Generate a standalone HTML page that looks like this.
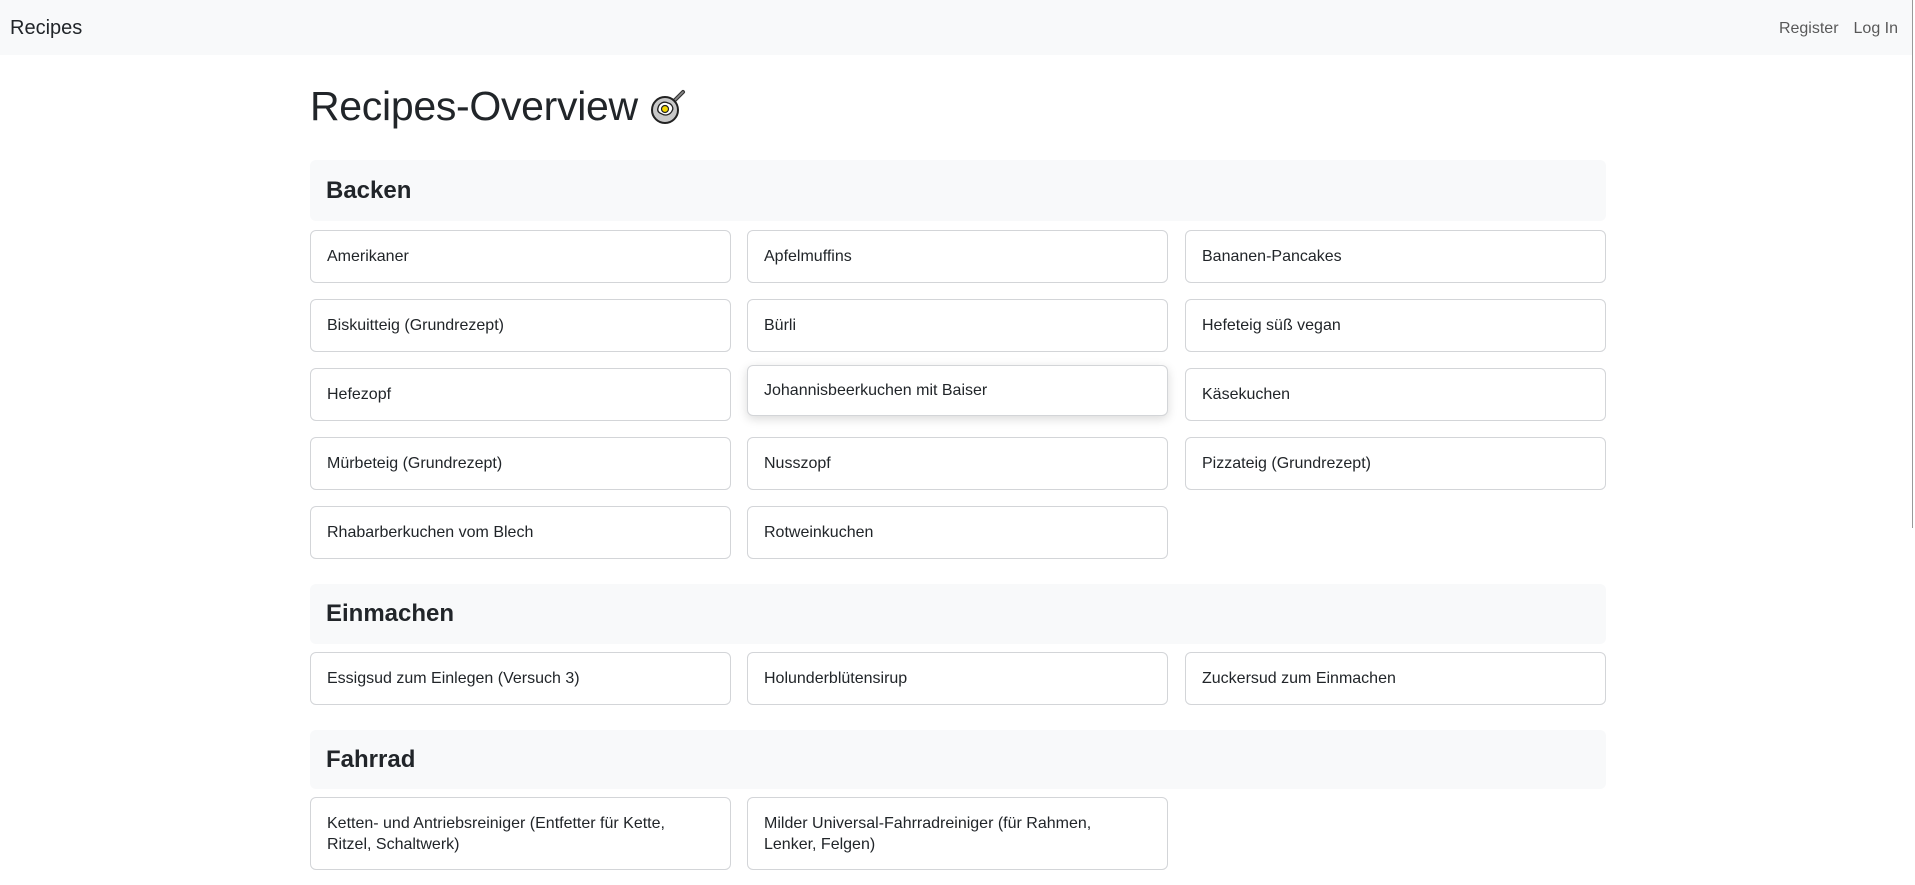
<!DOCTYPE html>
<html><head><meta charset="utf-8">
<style>
*{box-sizing:border-box;margin:0;padding:0}
body{width:1915px;height:885px;overflow:hidden;background:#fff;font-family:"Liberation Sans",sans-serif;color:#212529}
.nav{position:absolute;left:0;top:0;width:1915px;height:55px;background:#f8f9fa}
.brand{position:absolute;left:10px;top:17px;font-size:20px;color:#212529}
.links{position:absolute;right:17px;top:20px;font-size:16px;color:rgba(0,0,0,.65)}
.links span{margin-left:15px}
.sb{position:absolute;right:0;top:0;width:3px;height:528px;background:#fff;border-left:1px solid #999}
h1{position:absolute;left:310px;top:81px;font-size:41px;font-weight:400;line-height:50px;letter-spacing:-.3px}
h1 svg{vertical-align:-6px;margin-left:0}
.hd{position:absolute;left:310px;width:1296px;background:#f8f9fa;border-radius:6px;font-size:24px;font-weight:700;padding-left:16px}
.c{position:absolute;width:421px;height:53px;border:1px solid #d3d5d8;border-radius:6px;background:#fff;font-size:16px;padding-left:16px;display:flex;align-items:center;line-height:21px}
.h{box-shadow:0 3px 10px rgba(0,0,0,.15)}
</style></head><body>
<div class="nav"><div class="brand">Recipes</div><div class="links"><span>Register</span><span>Log In</span></div></div>
<div class="sb"></div>
<h1>Recipes-Overview <svg width="38" height="38" viewBox="0 0 38 38"><line x1="24" y1="14" x2="34" y2="4" stroke="#333" stroke-width="4" stroke-linecap="round"/><line x1="24" y1="14" x2="34" y2="4" stroke="#888" stroke-width="1.6" stroke-linecap="round"/><circle cx="16" cy="22" r="13" fill="#c8c8c8" stroke="#222" stroke-width="2"/><path d="M9 20c1-5 6-7 10-5 4 1 6 5 4 8-2 4-7 5-10 3-3-1-5-3-4-6z" fill="#fff" stroke="#222" stroke-width="1.3"/><circle cx="16" cy="21" r="3.5" fill="#f5d800" stroke="#222" stroke-width="1.2"/></svg></h1>

<div class="hd" style="top:160px;height:61px;line-height:61px">Backen</div>
<div class="c" style="left:310px;top:230px">Amerikaner</div>
<div class="c" style="left:747px;top:230px">Apfelmuffins</div>
<div class="c" style="left:1185px;top:230px">Bananen-Pancakes</div>
<div class="c" style="left:310px;top:299px">Biskuitteig (Grundrezept)</div>
<div class="c" style="left:747px;top:299px">Bürli</div>
<div class="c" style="left:1185px;top:299px">Hefeteig süß vegan</div>
<div class="c" style="left:310px;top:368px">Hefezopf</div>
<div class="c h" style="left:747px;top:365px;height:51px">Johannisbeerkuchen mit Baiser</div>
<div class="c" style="left:1185px;top:368px">Käsekuchen</div>
<div class="c" style="left:310px;top:437px">Mürbeteig (Grundrezept)</div>
<div class="c" style="left:747px;top:437px">Nusszopf</div>
<div class="c" style="left:1185px;top:437px">Pizzateig (Grundrezept)</div>
<div class="c" style="left:310px;top:506px">Rhabarberkuchen vom Blech</div>
<div class="c" style="left:747px;top:506px">Rotweinkuchen</div>

<div class="hd" style="top:584px;height:60px;line-height:60px">Einmachen</div>
<div class="c" style="left:310px;top:652px">Essigsud zum Einlegen (Versuch 3)</div>
<div class="c" style="left:747px;top:652px">Holunderblütensirup</div>
<div class="c" style="left:1185px;top:652px">Zuckersud zum Einmachen</div>

<div class="hd" style="top:730px;height:59px;line-height:59px">Fahrrad</div>
<div class="c" style="left:310px;top:797px;height:73px">Ketten- und Antriebsreiniger (Entfetter für Kette,<br>Ritzel, Schaltwerk)</div>
<div class="c" style="left:747px;top:797px;height:73px">Milder Universal-Fahrradreiniger (für Rahmen,<br>Lenker, Felgen)</div>
</body></html>
